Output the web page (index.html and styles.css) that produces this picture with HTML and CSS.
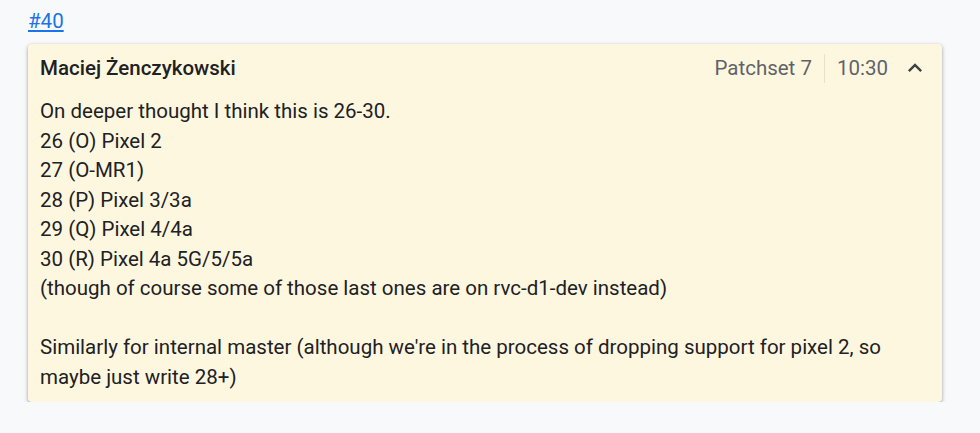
FILE: index.html
```html
<!DOCTYPE html>
<html>
<head>
<meta charset="utf-8">
<link rel="stylesheet" href="styles.css">
</head>
<body>
<div class="page">
  <a class="ref" href="#">#40</a>
  <div class="card">
    <div class="header">
      <span class="author">Maciej Żenczykowski</span>
      <span class="meta">
        <span class="patchset">Patchset 7</span>
        <span class="sep"></span>
        <span class="time">10:30</span>
        <svg class="chev" width="20" height="20" viewBox="0 0 24 24"><path d="M7.41 15.41L12 10.83l4.59 4.58L18 14l-6-6-6 6z" fill="#3c4043"/></svg>
      </span>
    </div>
    <div class="body">
      <div>On deeper thought I think this is 26-30.</div>
      <div>26 (O) Pixel 2</div>
      <div>27 (O-MR1)</div>
      <div>28 (P) Pixel 3/3a</div>
      <div>29 (Q) Pixel 4/4a</div>
      <div>30 (R) Pixel 4a 5G/5/5a</div>
      <div>(though of course some of those last ones are on rvc-d1-dev instead)</div>
      <div class="blank"></div>
      <div>Similarly for internal master (although we're in the process of dropping support for pixel 2, so maybe just write 28+)</div>
    </div>
  </div>
</div>
</body>
</html>
```
FILE: styles.css
```css
html, body {
  margin: 0;
  padding: 0;
  background: #f8f9fb;
  font-family: Roboto, "Liberation Sans", sans-serif;
  color: #202124;
}
.page {
  padding: 7px 38px 0 28px;
  display: flex;
  flex-direction: column;
  align-items: flex-start;
}
.ref {
  font-size: 20.5px;
  line-height: 29px;
  color: #1a73e8;
  text-decoration: underline;
  margin-bottom: 8px;
}
.card {
  align-self: stretch;
  background: #fef7e0;
  border-radius: 4px;
  box-shadow: 0 1px 3px rgba(60,64,67,0.35), 0 2px 4px 1px rgba(60,64,67,0.15);
  padding: 9px 12px 10px 12px;
}
.header {
  display: flex;
  align-items: center;
  justify-content: space-between;
  height: 30px;
}
.author {
  font-size: 20.5px;
  font-weight: 500;
  color: #202124;
}
.meta {
  display: flex;
  align-items: center;
  font-size: 20.5px;
  color: #5f6368;
}
.sep {
  width: 1px;
  height: 29px;
  background: #e8e0c8;
  margin: 0 12px;
}
.chev {
  margin-left: 13px;
  margin-right: 1px;
  width: 28px;
  height: 28px;
}
.body {
  margin-top: 14px;
  font-size: 20.5px;
  line-height: 29.5px;
}
.blank {
  height: 29.5px;
}
```
